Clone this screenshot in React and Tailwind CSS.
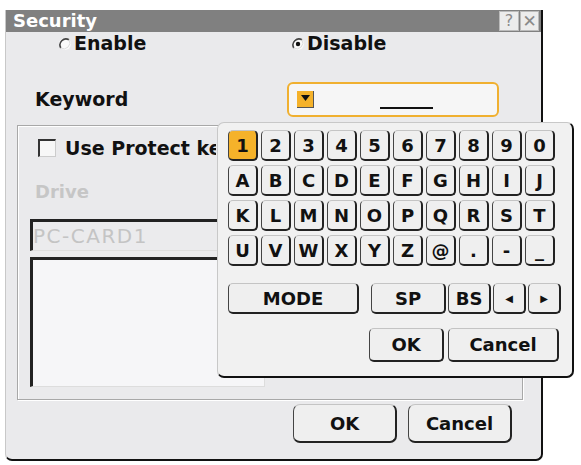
const font = { fontFamily: '"DejaVu Sans", Verdana, sans-serif' };

const rows = [
  ["1", "2", "3", "4", "5", "6", "7", "8", "9", "0"],
  ["A", "B", "C", "D", "E", "F", "G", "H", "I", "J"],
  ["K", "L", "M", "N", "O", "P", "Q", "R", "S", "T"],
  ["U", "V", "W", "X", "Y", "Z", "@", ".", "-", "_"],
];

const keyCls =
  "flex items-center justify-center border-l-[1.5px] border-t border-r-2 border-b-2 border-l-[#444] border-t-[#c4c4c4] border-r-[#222] border-b-[#222] rounded-[5px] text-[18px] font-bold text-[#111]";

const Radio = ({ checked }) => (
  <svg width="14" height="14" viewBox="0 0 14 14">
    <circle cx="7" cy="7" r="6" fill="#fafafa" />
    <path d="M11 2.8 A6 6 0 0 0 2.8 11" fill="none" stroke="#444" strokeWidth="1.6" />
    <path d="M2.8 11 A6 6 0 0 0 11 2.8" fill="none" stroke="#ddd" strokeWidth="1" />
    {checked && <circle cx="7" cy="7" r="2.2" fill="#111" />}
  </svg>
);

const Key = ({ label, active, className = "w-[30px]" }) => (
  <div className={`${keyCls} ${className} h-[31px] ${active ? "bg-[#f5b22a]" : "bg-[#efefef]"}`}>
    {label}
  </div>
);

const Keyboard = () => (
  <div className="absolute left-[217px] top-[122px] w-[357px] h-[256px] bg-[#f1f1f1] border-l border-t border-[#c8c8c8] border-r-2 border-b-2 border-r-[#111] border-b-[#111] rounded-[7px] pl-[10px] pt-[7px]">
    <div className="flex flex-col gap-[4px]">
      {rows.map((row, i) => (
        <div key={i} className="flex gap-[3px]">
          {row.map((k) => (
            <Key key={k} label={k} active={k === "1"} />
          ))}
        </div>
      ))}
    </div>
    <div className="flex mt-[17px]">
      <Key label="MODE" className="w-[131px]" />
      <div className="w-[12px]" />
      <Key label="SP" className="w-[75px]" />
      <div className="w-[2px]" />
      <Key label="BS" className="w-[43px]" />
      <div className="w-[2px]" />
      <Key label={<span className="text-[10px]">◀</span>} className="w-[33px]" />
      <div className="w-[2px]" />
      <Key label={<span className="text-[10px]">▶</span>} className="w-[33px]" />
    </div>
    <div className="flex mt-[14px] pl-[141px]">
      <div className={`${keyCls} w-[75px] h-[34px] bg-[#efefef]`}>OK</div>
      <div className="w-[4px]" />
      <div className={`${keyCls} w-[111px] h-[34px] bg-[#efefef]`}>Cancel</div>
    </div>
  </div>
);

export default function App() {
  return (
    <div className="relative w-[581px] h-[465px] bg-white pt-[10px] pl-[5px]" style={font}>
      <div className="w-[538px] h-[451px] flex flex-col bg-[#eaeaec] border-l border-[#c8c8c8] border-r-2 border-b-2 border-r-[#111] border-b-[#111] rounded-b-[7px]">
        {/* title bar */}
        <div className="h-[22px] bg-[#808080] flex items-center justify-between pl-[7px] pr-[2px]">
          <span className="text-white text-[18px] font-bold leading-none">Security</span>
          <div className="flex gap-[1px]">
            <div className="w-[20px] h-[20px] bg-[#ececec] border border-[#bbb] flex items-center justify-center text-[#8a8a8a] text-[16px] leading-none">?</div>
            <div className="w-[19px] h-[20px] bg-[#ececec] border border-[#bbb] flex items-center justify-center text-[#8a8a8a] text-[17px] leading-none">✕</div>
          </div>
        </div>

        {/* radios */}
        <div className="flex items-center h-[23px] pl-[52px] text-[19px] font-bold text-[#111]">
          <div className="flex items-center gap-[2px] w-[233px]">
            <Radio />
            <span>Enable</span>
          </div>
          <div className="flex items-center gap-[2px]">
            <Radio checked />
            <span>Disable</span>
          </div>
        </div>

        {/* keyword */}
        <div className="flex items-center mt-[27px] pl-[29px]">
          <span className="w-[252px] text-[19px] font-bold text-[#111]">Keyword</span>
          <div className="w-[212px] h-[35px] border-2 border-[#f0b030] rounded-[6px] bg-[#f6f6f6] flex items-center pl-[8px]">
            <div className="w-[17px] h-[17px] bg-[#f5b22a] border-r border-b border-[#555] flex items-start justify-center pt-[4px]">
              <svg width="9" height="6" viewBox="0 0 9 6"><path d="M0 0 H9 L4.5 6 Z" fill="#111" /></svg>
            </div>
            <div className="ml-[66px] mt-[16px] w-[53px] h-[2px] bg-[#111]" />
          </div>
        </div>

        {/* group frame */}
        <div className="ml-[11px] mt-[8px] w-[506px] h-[275px] border border-[#a8a8a8] shadow-[1px_1px_0_#fff,inset_1px_1px_0_#fff] pl-[12px] pt-[13px]">
          <div className="flex items-center pl-[8px] h-[18px] gap-[9px]">
            <div className="w-[18px] h-[18px] bg-[#f7f7f7] border-l-2 border-t-2 border-[#333] border-r border-b border-r-[#ccc] border-b-[#ccc]" />
            <span className="w-[151px] overflow-hidden text-[19px] font-bold text-[#111] whitespace-nowrap">Use Protect keyword</span>
          </div>
          <div className="mt-[24px] pl-[5px] text-[18px] font-bold text-[#c6c6c6] leading-[22px]">Drive</div>
          <div className="mt-[16px] w-[235px] h-[32px] border-l-[3px] border-t-[3px] border-[#222] border-r border-b border-r-[#ddd] border-b-[#ddd] bg-[#ebebed] flex items-center text-[20px] text-[#c4c4c4] tracking-[1.5px]">
            PC-CARD1
          </div>
          <div className="mt-[6px] w-[235px] h-[130px] border-l-[3px] border-t-[3px] border-[#222] border-r border-b border-r-[#ddd] border-b-[#ddd] bg-[#f6f6f8]" />
        </div>

        {/* buttons */}
        <div className="flex mt-[4px] pl-[287px] gap-[11px]">
          <div className={`${keyCls} w-[104px] h-[39px] bg-[#efefef] rounded-[7px]`}>OK</div>
          <div className={`${keyCls} w-[104px] h-[39px] bg-[#efefef] rounded-[7px]`}>Cancel</div>
        </div>
      </div>

      <Keyboard />
    </div>
  );
}
